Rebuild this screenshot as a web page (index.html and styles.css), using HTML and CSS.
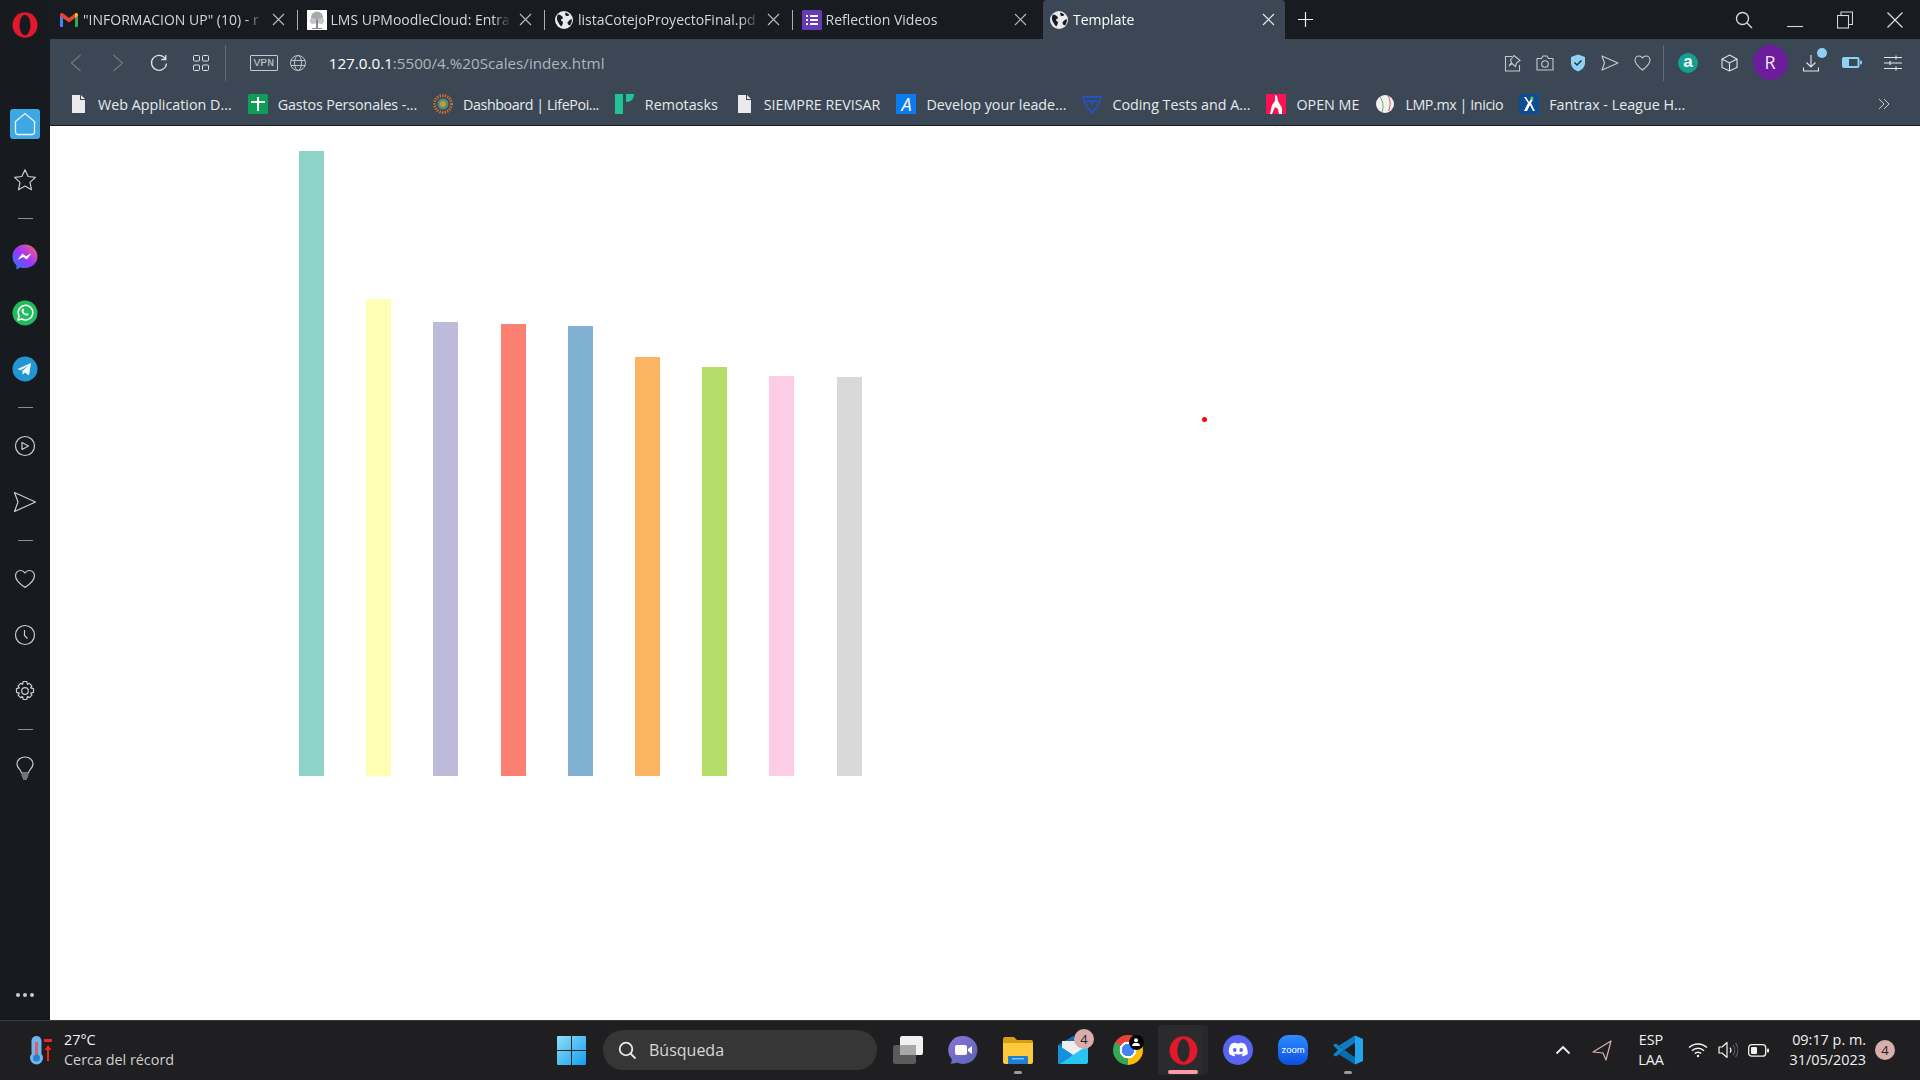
FILE: index.html
```html
<!DOCTYPE html>
<html lang="es">
<head>
    <meta charset="UTF-8">
    <title>Template</title>
    <link rel="stylesheet" href="styles.css">
</head>
<body>

    <!-- iconos repetidos -->
    <svg class="defs" width="0" height="0">
        <symbol id="globe" viewBox="0 0 20 20">
            <circle cx="10" cy="10" r="9" fill="#e8eaed"/>
            <path d="M4 4.5c2 .3 3.5 1 4.5 2.2 1 1.300 0 2.300-1.300 2.500-.7 1 .5 2 1.600 2.500.5 1.600-.6 3.500-1.600 4.800C5 14 3.500 11.500 3 9.500 2.800 7.500 3 6 4 4.500zM11.500 2.500c1.500.5 3 1.300 4 2.500-.8 1-2 1.300-3.300 1-1-.8-1.300-2.200-.7-3.500zM17.800 9c.3 2.500-.5 5-2 6.600-1.500-.3-2.300-1.500-2.300-3 .8-1.600 2.500-3 4.300-3.600z" fill="#181b20"/>
        </symbol>
        <symbol id="doc" viewBox="0 0 20 20">
            <path d="M4 1h8v5h5v13H4zM13 1l4 4h-4z" fill="#e8eaed"/>
        </symbol>
        <symbol id="x" viewBox="0 0 13 13">
            <path d="M1 1l11 11M12 1L1 12" stroke="currentColor" stroke-width="1.100" fill="none"/>
        </symbol>
    </svg>

    <div class="browser">

        <!-- barra lateral -->
        <aside class="sidebar">
            <svg class="opera-logo" viewBox="0 0 26 26"><ellipse cx="13" cy="13" rx="12.500" ry="12.800" fill="#e5172a"/><ellipse cx="13" cy="13" rx="5.500" ry="10.300" fill="#171b20"/></svg>
            <div class="side-btn"><span class="home-box"><svg width="22" height="24" viewBox="0 0 22 24" fill="none" stroke="#e8f4fb" stroke-width="1.300"><path d="M1.500 9.500L11 1.500l9.500 8V20a2.500 2.500 0 0 1-2.500 2.500H4A2.500 2.500 0 0 1 1.500 20z"/></svg></span></div>
            <div class="side-btn"><svg width="26" height="26" viewBox="0 0 24 24" fill="none" stroke="#c9cdd1" stroke-width="1.100"><path d="M12 2.500l2.900 6.300 6.700.8-5 4.600 1.400 6.800-6-3.400-6 3.400 1.400-6.800-5-4.600 6.700-.8z" stroke-linejoin="round"/></svg></div>
            <div class="side-sep"></div>
            <div class="side-btn"><svg width="26" height="26" viewBox="0 0 26 26"><defs><linearGradient id="msg" x1="0" y1="1" x2="1" y2="0"><stop offset="0" stop-color="#1e7cf5"/><stop offset=".5" stop-color="#a033ff"/><stop offset="1" stop-color="#ff6b5c"/></linearGradient></defs><path d="M13 .5C6 .5.500 5.600.500 12.500c0 3.600 1.500 6.700 3.900 8.800V25.500l3.900-2.100c1.500.4 3 .6 4.700.6 7 0 12.500-5.100 12.500-11.500S20 .5 13 .5z" fill="url(#msg)"/><path d="M5.500 16l4.800-6.500 3.600 2.700 5.600-3-4.700 6.400-3.600-2.700z" fill="#fff"/></svg></div>
            <div class="side-btn"><svg width="26" height="26" viewBox="0 0 26 26"><circle cx="13" cy="13" r="12.500" fill="#1fbd5b"/><path d="M6 20l1.100-3.900A7.300 7.300 0 1 1 10 19z" fill="none" stroke="#fff" stroke-width="1.500" stroke-linejoin="round"/><path d="M10.200 9c.8-.8 1.300-.3 1.700 1 .2.600-.7 1-.5 1.500.5 1.100 1.300 1.800 2.400 2.300.5.100.9-.8 1.400-.6 1.300.5 1.800 1 1 1.800-1.200 1.100-3.200.6-5-.9-1.700-1.500-2.200-3.800-1-5.100z" fill="#fff"/></svg></div>
            <div class="side-btn"><svg width="26" height="26" viewBox="0 0 26 26"><circle cx="13" cy="13" r="12.500" fill="#2196d3"/><path d="M5.500 13l13.500-6-2 12.500-4-3-2.200 2.200-.6-3.800 6.300-5.400-8 4.700z" fill="#f2f8fc"/></svg></div>
            <div class="side-sep"></div>
            <div class="side-btn"><svg width="22" height="22" viewBox="0 0 22 22" fill="none" stroke="#c9cdd1" stroke-width="1.200"><circle cx="11" cy="11" r="9.500"/><path d="M8 7.500v7l6.500-3.500z" stroke-linejoin="round"/></svg></div>
            <div class="side-btn"><svg width="24" height="22" viewBox="0 0 24 22" fill="none" stroke="#c9cdd1" stroke-width="1.200"><path d="M1.500 1.500L22.500 11 1.500 20.500 5 11z" stroke-linejoin="round"/></svg></div>
            <div class="side-sep"></div>
            <div class="side-btn"><svg width="22" height="20" viewBox="0 0 22 20" fill="none" stroke="#c9cdd1" stroke-width="1.200"><path d="M11 18.500C5 14.500 1.500 11 1.500 6.800 1.500 3.500 4 1.500 6.500 1.500c2 0 3.500 1 4.500 2.500 1-1.500 2.500-2.500 4.500-2.500 2.500 0 5 2 5 5.300 0 4.200-3.500 7.700-9.500 11.700z" stroke-linejoin="round"/></svg></div>
            <div class="side-btn"><svg width="22" height="22" viewBox="0 0 22 22" fill="none" stroke="#c9cdd1" stroke-width="1.200"><circle cx="11" cy="11" r="9.500"/><path d="M10.500 6v5.500l3 3"/></svg></div>
            <div class="side-btn"><svg width="22" height="22" viewBox="0 0 22 22" fill="none" stroke="#c9cdd1" stroke-width="1.200"><circle cx="11" cy="11" r="3.300"/><path d="M9.200 1.500h3.600l.6 2.800 2-.9 2.500 2.500-1.200 2 2.800.8v3.600l-2.800.8 1.200 2-2.500 2.500-2-1-.6 2.900H9.200l-.6-2.900-2 1-2.500-2.500 1.200-2-2.800-.8V8.700l2.800-.8-1.200-2 2.500-2.500 2 .9z" stroke-linejoin="round"/></svg></div>
            <div class="side-sep"></div>
            <div class="side-btn"><svg width="20" height="24" viewBox="0 0 20 24" fill="none" stroke="#c9cdd1" stroke-width="1.200"><path d="M6.500 17c0-3-4.500-4.500-4.500-9a8 7 0 0 1 16 0c0 4.500-4.500 6-4.500 9z"/><path d="M6.500 19h7M7 21h6M8 23h4"/></svg></div>
            <div class="side-dots"><i></i><i></i><i></i></div>
        </aside>

        <div class="main">

            <!-- pestañas -->
            <div class="tabs">
                <div class="tab">
                    <svg class="tab-icon" viewBox="0 0 20 20"><path d="M1 5h3v12H2a1 1 0 0 1-1-1z" fill="#4285f4"/><path d="M16 5h3v11a1 1 0 0 1-1 1h-2z" fill="#34a853"/><path d="M1 4.500c0-1.500 1.700-2 2.800-1.200L10 8l6-4.500V8l-6 4.500L1 6z" fill="#ea4335"/><path d="M16 3.500c1-.8 3-.3 3 1.200V6l-3 2z" fill="#fbbc04"/></svg>
                    <span class="tab-title">"INFORMACION UP" (10) - r</span>
                    <svg class="tab-close"><use href="#x"/></svg>
                </div>
                <div class="tab">
                    <svg class="tab-icon" viewBox="0 0 20 20"><rect width="20" height="20" fill="#fff"/><circle cx="10" cy="7.500" r="6" fill="#a9a9a9"/><circle cx="6" cy="11" r="3" fill="#c4c4c4"/><circle cx="14" cy="11" r="3" fill="#c4c4c4"/><path d="M9 10h2v8H9zM5 18h10v1H5z" fill="#8a8a8a"/></svg>
                    <span class="tab-title">LMS UPMoodleCloud: Entra</span>
                    <svg class="tab-close"><use href="#x"/></svg>
                </div>
                <div class="tab">
                    <svg class="tab-icon"><use href="#globe"/></svg>
                    <span class="tab-title">listaCotejoProyectoFinal.pd</span>
                    <svg class="tab-close"><use href="#x"/></svg>
                </div>
                <div class="tab tab-last">
                    <svg class="tab-icon" viewBox="0 0 20 20"><rect width="20" height="20" rx="1.500" fill="#673ab7"/><path d="M4 5h2v2H4zM8 5h8v2H8zM4 9h2v2H4zM8 9h8v2H8zM4 13h2v2H4zM8 13h8v2H8z" fill="#fff"/></svg>
                    <span class="tab-title">Reflection Videos</span>
                    <svg class="tab-close"><use href="#x"/></svg>
                </div>
                <div class="tab tab-active">
                    <svg class="tab-icon"><use href="#globe"/></svg>
                    <span class="tab-title">Template</span>
                    <svg class="tab-close"><use href="#x"/></svg>
                </div>
                <svg class="tab-new" width="15" height="15" viewBox="0 0 15 15"><path d="M7.500 0v15M0 7.500h15" stroke="#f0f2f4" stroke-width="1.200"/></svg>
                <div class="win-controls">
                    <svg class="win-search" width="18" height="18" viewBox="0 0 18 18" fill="none" stroke="#d5d8db" stroke-width="1.400"><circle cx="7.500" cy="7.500" r="6"/><path d="M12 12l5 5"/></svg>
                    <svg class="win-btn" width="16" height="16" viewBox="0 0 16 16"><path d="M0 14.500h16" stroke="#d5d8db" stroke-width="1.100"/></svg>
                    <svg class="win-btn" width="16" height="18" viewBox="0 0 16 18" fill="none" stroke="#d5d8db" stroke-width="1.100"><rect x=".5" y="4.500" width="11" height="12.500"/><path d="M4 4.500V1h11.500v12.500h-4"/></svg>
                    <svg class="win-btn" width="16" height="16" viewBox="0 0 16 16"><path d="M.5.500l15 15M15.500.500l-15 15" stroke="#e3e5e7" stroke-width="1.100"/></svg>
                </div>
            </div>

            <!-- barra de dirección -->
            <div class="toolbar">
                <div class="tool"><svg width="12" height="18" viewBox="0 0 12 18" fill="none" stroke="#6d7984" stroke-width="1.200"><path d="M10.500 1l-9 8 9 8"/></svg></div>
                <div class="tool"><svg width="12" height="18" viewBox="0 0 12 18" fill="none" stroke="#6d7984" stroke-width="1.200"><path d="M1.500 1l9 8-9 8"/></svg></div>
                <div class="tool"><svg width="18" height="18" viewBox="0 0 18 18" fill="none" stroke="#dfe2e5" stroke-width="1.300"><path d="M15.500 5A7.500 7.500 0 1 0 16.500 9.500M15.800 1v4.500h-4.500"/></svg></div>
                <div class="tool"><svg width="16" height="16" viewBox="0 0 16 16" fill="none" stroke="#dfe2e5" stroke-width="1"><rect x=".5" y=".5" width="6" height="5.500" rx="1"/><rect x="9.500" y=".5" width="6" height="5.500" rx="1"/><rect x=".5" y="10" width="6" height="5.500" rx="1"/><rect x="9.500" y="10" width="6" height="5.500" rx="1"/></svg></div>
                <div class="tool-sep"></div>
                <span class="vpn">VPN</span>
                <svg class="url-globe" width="16" height="16" viewBox="0 0 16 16" fill="none" stroke="#c9cdd1" stroke-width=".9"><circle cx="8" cy="8" r="7.500"/><ellipse cx="8" cy="8" rx="3.500" ry="7.500"/><path d="M1 5.500h14M1 10.500h14"/></svg>
                <div class="url"><b>127.0.0.1</b>:5500/4.%20Scales/index.html</div>
                <div class="tool-right">
                    <div class="tool-sm"><svg width="18" height="18" viewBox="0 0 18 18" fill="none" stroke="#c4c9ce" stroke-width="1.100"><path d="M8 2.500H1.500V17h14v-6M10 1.500l6 5-3.500 2.500-1 3.500-3.500-3-3 2.500 2.500-3.500-1-2.500z"/></svg></div>
                    <div class="tool-sm"><svg width="18" height="16" viewBox="0 0 18 16" fill="none" stroke="#c4c9ce" stroke-width="1.100"><path d="M1 3.500h4.500L7 1h4l1.500 2.500H17V15H1z" stroke-linejoin="round"/><circle cx="9" cy="9" r="3.300"/></svg></div>
                    <div class="tool-sm"><svg width="16" height="18" viewBox="0 0 16 18"><path d="M8 .5l7 2.500v6c0 4-3 7-7 8.500-4-1.500-7-4.500-7-8.500V3z" fill="#8fd0f5"/><path d="M4.500 8.500L7 11l4.500-4.500" fill="none" stroke="#26323d" stroke-width="1.500"/></svg></div>
                    <div class="tool-sm"><svg width="18" height="16" viewBox="0 0 18 16" fill="none" stroke="#c4c9ce" stroke-width="1.100"><path d="M1 1l16 7-16 7 2.500-7z" stroke-linejoin="round"/></svg></div>
                    <div class="tool-sm"><svg width="17" height="16" viewBox="0 0 17 16" fill="none" stroke="#c4c9ce" stroke-width="1.100"><path d="M8.500 15C4 11.500 1 9 1 5.200 1 2.800 2.800 1 5 1c1.500 0 2.700.8 3.500 2C9.300 1.800 10.500 1 12 1c2.200 0 4 1.800 4 4.200C16 9 13 11.500 8.500 15z"/></svg></div>
                    <div class="tool-sep tool-sep-right"></div>
                    <div class="tool"><span class="amazon">a</span></div>
                    <div class="tool"><svg width="17" height="18" viewBox="0 0 17 18" fill="none" stroke="#e3e6e8" stroke-width="1.100"><path d="M8.500 1L16 5v8.500L8.500 17 1 13.500V5zM1 5l7.500 4L16 5M8.500 9v8"/></svg></div>
                    <div class="tool"><span class="avatar">R</span></div>
                    <div class="tool tool-dl"><svg width="16" height="18" viewBox="0 0 16 18" fill="none" stroke="#e3e6e8" stroke-width="1.100"><path d="M8 1v12M3.500 8.500L8 13l4.500-4.500M.5 13.500v3.500h15v-3.500"/></svg><i class="dl-dot"></i></div>
                    <div class="tool"><svg width="20" height="11" viewBox="0 0 20 11"><rect width="17.500" height="11" rx="2" fill="#8fd0f5"/><rect x="7" y="2" width="8.500" height="7" fill="#3b4754"/><rect x="18" y="3.500" width="2" height="4" rx="1" fill="#8fd0f5"/></svg></div>
                    <div class="tool"><svg width="18" height="16" viewBox="0 0 18 16" stroke="#e3e6e8" stroke-width="1.100" fill="none"><path d="M0 2.500h18M0 8h18M0 13.500h18M12 .5v4M6 6v4M12 11.500v4"/></svg></div>
                </div>
            </div>

            <!-- marcadores -->
            <div class="bookmarks">
                <div class="bm"><svg class="bm-icon"><use href="#doc"/></svg>Web Application D...</div>
                <div class="bm bm-snug"><svg class="bm-icon" viewBox="0 0 20 20"><rect width="20" height="20" rx="1.500" fill="#0f9d58"/><path d="M9 3h2v4h6v2h-6v8H9V9H3V7h6z" fill="#fff"/></svg>Gastos Personales -...</div>
                <div class="bm bm-tight"><svg class="bm-icon" viewBox="0 0 20 20" fill="none"><circle cx="10" cy="10" r="8.500" stroke="#d9702b" stroke-width="3" stroke-dasharray="1.300 1.300"/><circle cx="10" cy="10" r="5.500" fill="#4d8f7b"/><circle cx="10" cy="10" r="3" fill="#c29b3b"/></svg>Dashboard | LifePoi...</div>
                <div class="bm"><svg class="bm-icon" viewBox="0 0 20 20"><rect x="0" width="8" height="20" fill="#1fc497"/><path d="M11 0h8c0 5-3 8-8 8z" fill="#1fc497"/></svg>Remotasks</div>
                <div class="bm"><svg class="bm-icon"><use href="#doc"/></svg>SIEMPRE REVISAR</div>
                <div class="bm"><span class="bm-a">A</span>Develop your leade...</div>
                <div class="bm"><svg class="bm-icon" viewBox="0 0 20 20" fill="none" stroke="#1d57e0" stroke-width="1.400"><path d="M1 3h18l-3 8-6 8-6-8zM5 7h4l1 3 1-3h4"/></svg>Coding Tests and A...</div>
                <div class="bm"><svg class="bm-icon" viewBox="0 0 20 20"><rect width="20" height="20" fill="#ff1053"/><path d="M9 1l2 1 1 5 4 7v6h-3l-1-5-3-2-3 7H4l2-9 3-4z" fill="#fff"/></svg>OPEN ME</div>
                <div class="bm bm-tight"><svg class="bm-icon" viewBox="0 0 20 20" fill="none"><circle cx="10" cy="10" r="9" fill="#f2f2f2"/><path d="M5 3c3 4 4 9 2 15" stroke="#5fae72" stroke-width="1"/><path d="M13 2c2.500 4 3 9 .5 15" stroke="#d9534f" stroke-width="1"/></svg>LMP.mx | Inicio</div>
                <div class="bm"><svg class="bm-icon" viewBox="0 0 20 20"><rect width="20" height="20" fill="#0b4e96"/><path d="M5 3l4 6-4 8h3l3-6 3 6h2l-4-8 2-3-2-1-2 3-3-5z" fill="#fff"/><circle cx="13" cy="4" r="1.500" fill="#7ed321"/></svg>Fantrax - League H...</div>
                <svg class="bm-more" width="12" height="12" viewBox="0 0 12 12" fill="none" stroke="#c9cdd1" stroke-width="1"><path d="M1 1l5 5-5 5M6 1l5 5-5 5"/></svg>
            </div>

            <!-- contenido de la página -->
            <div class="content">
                <div class="chart">
                    <div class="bar bar-1" style="height: 625px"></div>
                    <div class="bar bar-2" style="height: 477px"></div>
                    <div class="bar bar-3" style="height: 454px"></div>
                    <div class="bar bar-4" style="height: 452px"></div>
                    <div class="bar bar-5" style="height: 450px"></div>
                    <div class="bar bar-6" style="height: 419px"></div>
                    <div class="bar bar-7" style="height: 409px"></div>
                    <div class="bar bar-8" style="height: 400px"></div>
                    <div class="bar bar-9" style="height: 399px"></div>
                </div>
                <div class="dot"></div>
            </div>
        </div>
    </div>

    <!-- barra de tareas -->
    <footer class="taskbar">
        <div class="weather">
            <svg width="24" height="30" viewBox="0 0 24 30"><rect x="2.500" y="1" width="10" height="21" rx="5" fill="#6cb8ee"/><circle cx="7.500" cy="23" r="6.500" fill="#6cb8ee"/><rect x="6" y="7" width="3" height="14" fill="#e05a6d"/><circle cx="7.500" cy="23" r="3.500" fill="#2f7fd1"/><rect x="15" y="4" width="8" height="3" fill="#f0261d"/><path d="M19 10l3.500 5H20v11h-2V15h-2.500z" fill="#f0261d"/></svg>
            <div class="weather-text">
                <span class="weather-temp">27°C</span>
                <span class="weather-note">Cerca del récord</span>
            </div>
        </div>
        <svg class="start" width="29" height="29" viewBox="0 0 29 29"><defs><linearGradient id="win" x1="0" y1="0" x2="1" y2="1"><stop offset="0" stop-color="#8ee0f7"/><stop offset="1" stop-color="#119ef0"/></linearGradient></defs><path d="M0 1a1 1 0 0 1 1-1h13v14H0zM15 0h13a1 1 0 0 1 1 1v13H15zM0 15h14v14H1a1 1 0 0 1-1-1zM15 15h14v13a1 1 0 0 1-1 1H15z" fill="url(#win)"/></svg>
        <div class="search">
            <svg width="19" height="19" viewBox="0 0 19 19" fill="none" stroke="#e8e8e8" stroke-width="1.800"><circle cx="8" cy="8" r="6.300"/><path d="M12.500 12.500l5 5"/></svg>
            <span>Búsqueda</span>
        </div>
        <div class="apps">
            <div class="app"><svg width="30" height="28" viewBox="0 0 30 28"><rect y="9" width="23" height="19" rx="2.500" fill="#5b5b5b"/><rect x="7" width="23" height="19" rx="2" fill="#f1f1f1"/><rect x="7" y="9" width="16" height="10" fill="#a8a8a8"/></svg></div>
            <div class="app"><svg width="30" height="30" viewBox="0 0 30 30"><defs><linearGradient id="teams" x1="0" y1="0" x2="1" y2="1"><stop offset="0" stop-color="#8c74d8"/><stop offset="1" stop-color="#5a63b5"/></linearGradient></defs><path d="M15.500 1a14 14 0 1 1-6 26.700L2.500 29c1.200-1.500 1.500-3.500 1-5.200A14 14 0 0 1 15.500 1z" fill="url(#teams)"/><rect x="7" y="10" width="12" height="10" rx="2" fill="#fff"/><path d="M20 14l4-3v8l-4-3z" fill="#fff"/></svg></div>
            <div class="app app-open"><svg width="30" height="27" viewBox="0 0 30 27"><path d="M0 2a2 2 0 0 1 2-2h9l3 3h14a2 2 0 0 1 2 2v4H0z" fill="#d99f14"/><path d="M0 6h30v19a2 2 0 0 1-2 2H2a2 2 0 0 1-2-2z" fill="#ffc83d"/><path d="M5 27v-7a1 1 0 0 1 1-1h18a1 1 0 0 1 1 1v7z" fill="#1c7fd1"/><rect x="9" y="21" width="12" height="1.500" fill="#7fc4f0"/></svg></div>
            <div class="app"><svg width="30" height="28" viewBox="0 0 30 28"><path d="M0 9L15 0l15 9v2H0z" fill="#0f6cbd"/><path d="M4 5h22v14H4z" fill="#eee"/><path d="M0 9l15 10L30 9v17a2 2 0 0 1-2 2H2a2 2 0 0 1-2-2z" fill="#29c4f0"/><path d="M0 26V9l15 10L2 28a2 2 0 0 1-2-2z" fill="#1490df"/></svg><span class="app-badge">4</span></div>
            <div class="app"><span class="chrome"></span><span class="chrome-user"><svg width="8" height="8" viewBox="0 0 8 8" fill="#fff"><circle cx="4" cy="2.200" r="2"/><path d="M0 8c0-2.500 2-3 4-3s4 .5 4 3z"/></svg></span></div>
            <div class="app app-active"><svg width="29" height="29" viewBox="0 0 26 26"><ellipse cx="13" cy="13" rx="12.500" ry="12.800" fill="#e5172a"/><ellipse cx="13" cy="13" rx="5.500" ry="10.300" fill="#2b2b2d"/></svg></div>
            <div class="app"><svg width="30" height="30" viewBox="0 0 30 30"><circle cx="15" cy="15" r="15" fill="#5865f2"/><path d="M8 9c2-1 3.500-1.400 4.500-1.500l.5 1c1.300-.2 2.700-.2 4 0l.5-1c1 .1 2.500.5 4.500 1.500 2 3 3 6.500 2.700 10-1.800 1.300-3.500 2-5 2.500l-1-1.800c.6-.2 1.200-.5 1.700-.9l-.5-.3c-2.800 1.300-6 1.300-8.800 0l-.5.3c.5.400 1.100.7 1.700.9l-1 1.800c-1.500-.5-3.200-1.200-5-2.500C5 15.500 6 12 8 9z" fill="#fff"/><ellipse cx="11.800" cy="15" rx="1.800" ry="2" fill="#5865f2"/><ellipse cx="18.200" cy="15" rx="1.800" ry="2" fill="#5865f2"/></svg></div>
            <div class="app"><span class="zoom">zoom</span></div>
            <div class="app app-open"><svg width="30" height="30" viewBox="0 0 30 30"><path d="M22 .5L30 4v22l-8 3.500V.5z" fill="#20a5ee"/><path d="M22 .5v7L11.500 15 6 10.500z" fill="#0f7bc4"/><path d="M22 29.500v-7L11.500 15 6 19.500z" fill="#0a6cb0"/><path d="M0 10l3-1.500L11.500 15 3 21.500 0 20l5-5z" fill="#0e84cf"/></svg></div>
        </div>
        <div class="tray">
            <div class="tray-item"><svg width="16" height="10" viewBox="0 0 16 10" fill="none" stroke="#f2f2f2" stroke-width="1.800"><path d="M1.500 8.500L8 2l6.500 6.500"/></svg></div>
            <div class="tray-item tray-arrow"><svg width="20" height="21" viewBox="0 0 20 21" fill="none" stroke="#d9b4b0" stroke-width="1.200"><path d="M1 12L19 1l-5 19-3-7z" stroke-linejoin="round"/></svg></div>
            <div class="lang">ESP<br>LAA</div>
            <div class="tray-item tray-wifi"><svg width="20" height="16" viewBox="0 0 20 16" fill="none" stroke="#f2f2f2" stroke-width="1.500"><path d="M1 5.500a13 13 0 0 1 18 0M4 8.700a8.500 8.500 0 0 1 12 0M6.800 11.500a4.500 4.500 0 0 1 6.400 0"/><circle cx="10" cy="14" r="1.200" fill="#f2f2f2" stroke="none"/></svg></div>
            <div class="tray-item tray-sound"><svg width="20" height="18" viewBox="0 0 20 18" fill="none" stroke="#f2f2f2" stroke-width="1.200"><path d="M1 6h3l5-4.500v15L4 12H1z" stroke-linejoin="round"/><path d="M12 6.500a4 4 0 0 1 0 5"/><path d="M15 4a8 8 0 0 1 0 10M17.500 2a11 11 0 0 1 0 14" stroke="#5c5c5c"/></svg></div>
            <div class="tray-item tray-batt"><svg width="21" height="13" viewBox="0 0 21 13" fill="none"><rect x=".7" y=".7" width="17" height="11.500" rx="3" stroke="#f2f2f2" stroke-width="1.300"/><rect x="3" y="3" width="6" height="7" rx="1" fill="#f2f2f2"/><rect x="19" y="4.500" width="2" height="4" rx="1" fill="#f2f2f2"/></svg></div>
            <div class="clock">09:17 p. m.<br>31/05/2023</div>
            <span class="notif">4</span>
        </div>
    </footer>

</body>
</html>
```

FILE: styles.css
```css
* {
    box-sizing: border-box;
}
html, body {
    margin: 0;
    padding: 0;
    height: 100%;
}
body {
    width: 1920px;
    height: 1080px;
    overflow: hidden;
    display: flex;
    flex-direction: column;
    font-family: "Open Sans", "Noto Sans", sans-serif;
    font-size: 14px;
    color: #e8eaed;
    background: #fff;
}
svg {
    display: block;
    flex-shrink: 0;
}
.defs {
    position: absolute;
}
.browser {
    flex: 1;
    display: flex;
    min-height: 0;
}

/* barra lateral */
.sidebar {
    width: 50px;
    flex-shrink: 0;
    display: flex;
    flex-direction: column;
    align-items: center;
    background: #171b20;
}
.opera-logo {
    width: 26px;
    height: 26px;
    margin: 12px 0 58px;
}
.side-btn {
    height: 56px;
    width: 100%;
    display: flex;
    align-items: center;
    justify-content: center;
}
.home-box {
    width: 30px;
    height: 30px;
    border-radius: 3px;
    background: #3fa8e4;
    display: flex;
    align-items: center;
    justify-content: center;
}
.side-sep {
    height: 21px;
    width: 15px;
    margin-left: 1px;
    display: flex;
    align-items: center;
}
.side-sep::before {
    content: "";
    width: 100%;
    height: 1px;
    background: #8a8f94;
}
.side-dots {
    margin-top: auto;
    margin-bottom: 23px;
    display: flex;
    gap: 3px;
}
.side-dots i {
    width: 4px;
    height: 4px;
    border-radius: 50%;
    background: #c9cdd1;
}

.main {
    flex: 1;
    min-width: 0;
    display: flex;
    flex-direction: column;
}

/* pestañas */
.tabs {
    height: 39px;
    flex-shrink: 0;
    display: flex;
    align-items: stretch;
    background: #181b20;
}
.tab {
    width: 247.5px;
    flex-shrink: 0;
    display: flex;
    align-items: center;
    padding: 0 13px 0 9px;
    position: relative;
    color: #d3d7db;
    font-size: 14px;
}
.tab::after {
    content: "";
    position: absolute;
    right: 0;
    top: 10px;
    height: 20px;
    width: 1px;
    background: #aab0b5;
}
.tab-last::after {
    display: none;
}
.tab-icon {
    width: 20px;
    height: 20px;
    margin-right: 4px;
}
.tab-title {
    flex: 1;
    white-space: nowrap;
    -webkit-mask-image: linear-gradient(to right, #000 calc(100% - 18px), transparent);
    mask-image: linear-gradient(to right, #000 calc(100% - 18px), transparent);
}
.tab-close {
    width: 13px;
    height: 13px;
    margin-left: 8px;
    color: #b9bdc1;
}
.tab-active {
    margin-left: 3px;
    margin-right: 3px;
    width: 241.5px;
    padding-left: 6px;
    padding-right: 10px;
    background: #3b4754;
    border-radius: 4px 4px 0 0;
    color: #fff;
}
.tab-active::after {
    display: none;
}
.tab-active .tab-close {
    color: #eef0f2;
}
.tab-new {
    align-self: center;
    margin-left: 10px;
}
.win-controls {
    margin-left: auto;
    display: flex;
    align-items: center;
    padding-right: 17px;
}
.win-btn {
    margin-left: 34px;
}

/* barra de dirección */
.toolbar {
    height: 47px;
    flex-shrink: 0;
    display: flex;
    align-items: center;
    padding-left: 5px;
    background: #3b4754;
}
.tool {
    width: 41.7px;
    height: 47px;
    flex-shrink: 0;
    display: flex;
    align-items: center;
    justify-content: center;
}
.tool-sm {
    width: 32.5px;
    height: 47px;
    display: flex;
    align-items: center;
    justify-content: center;
}
.tool-sep {
    width: 1px;
    height: 36px;
    margin: 0 24px 0 3px;
    background: #5f6b76;
}
.tool-sep-right {
    margin: 0 3.5px 0 4px;
}
.vpn {
    width: 28px;
    height: 16px;
    border: 1px solid #c4c9ce;
    border-radius: 1px;
    font-family: "Liberation Mono", monospace;
    font-size: 11.500px;
    line-height: 14px;
    text-align: center;
    color: #c4c9ce;
}
.url-globe {
    margin-left: 12px;
}
.url {
    margin-left: 23px;
    font-size: 15.200px;
    color: #aeb6bd;
    white-space: nowrap;
}
.url b {
    font-weight: 400;
    color: #fff;
}
.tool-right {
    margin-left: auto;
    display: flex;
    align-items: center;
    padding-right: 6.5px;
}
.tool-right .tool {
    width: 41px;
}
.amazon {
    width: 20px;
    height: 20px;
    border-radius: 50%;
    background: #12a08f;
    color: #fff;
    font-family: "Liberation Sans", sans-serif;
    font-size: 17px;
    font-weight: 700;
    line-height: 17px;
    text-align: center;
}
.avatar {
    width: 35px;
    height: 35px;
    border-radius: 50%;
    background: #6b1d9c;
    color: #f2e8f7;
    font-size: 18px;
    line-height: 35px;
    text-align: center;
}
.tool-dl {
    position: relative;
}
.dl-dot {
    position: absolute;
    left: 26px;
    top: 9px;
    width: 10px;
    height: 10px;
    border-radius: 50%;
    background: #8fd0f5;
}

/* marcadores */
.bookmarks {
    height: 40px;
    flex-shrink: 0;
    display: flex;
    align-items: center;
    gap: 16px;
    padding: 0 30px 3px 18px;
    background: #3b4754;
    border-bottom: 1px solid #14171b;
    font-size: 14.300px;
    color: #e6e9ec;
    white-space: nowrap;
}
.bm {
    display: flex;
    align-items: center;
    gap: 10px;
}
.bm-snug {
    letter-spacing: -.12px;
}
.bm-tight {
    letter-spacing: -.42px;
}
.bm-icon {
    width: 20px;
    height: 20px;
}
.bm-a {
    width: 20px;
    height: 20px;
    background: #0a7cf0;
    color: #fff;
    font-style: italic;
    font-size: 18px;
    line-height: 20px;
    text-align: center;
}
.bm-more {
    margin-left: auto;
}

/* contenido */
.content {
    flex: 1;
    position: relative;
    background: #fff;
}
.chart {
    height: 650px;
    display: flex;
    align-items: flex-end;
    gap: 42.2px;
    padding-left: 249px;
}
.bar {
    width: 25px;
    flex-shrink: 0;
}
.bar-1 { background: #8dd3c7; }
.bar-2 { background: #ffffb3; }
.bar-3 { background: #bebada; }
.bar-4 { background: #fb8072; }
.bar-5 { background: #80b1d3; }
.bar-6 { background: #fdb462; }
.bar-7 { background: #b3de69; }
.bar-8 { background: #fccde5; }
.bar-9 { background: #d9d9d9; }
.dot {
    position: absolute;
    left: 1152px;
    top: 291px;
    width: 5px;
    height: 5px;
    border-radius: 50%;
    background: #f00;
}

/* barra de tareas */
.taskbar {
    height: 60px;
    flex-shrink: 0;
    display: flex;
    align-items: center;
    padding-bottom: 1px;
    background: #1f1f21;
    border-top: 1px solid #3a3a3b;
    color: #f2f2f2;
}
.weather {
    width: 557px;
    flex-shrink: 0;
    padding-left: 29px;
    display: flex;
    align-items: center;
    gap: 11px;
}
.weather-text {
    display: flex;
    flex-direction: column;
    line-height: 20px;
    font-size: 14.400px;
}
.weather-note {
    color: #cfcfcf;
}
.search {
    width: 274px;
    height: 40px;
    margin-left: 17px;
    padding-left: 15px;
    border-radius: 20px;
    background: #363637;
    display: flex;
    align-items: center;
    gap: 12px;
    font-size: 16px;
    color: #d8d8d8;
}
.apps {
    display: flex;
    margin-left: 3.5px;
}
.app {
    width: 55px;
    height: 58px;
    position: relative;
    display: flex;
    align-items: center;
    justify-content: center;
}
.app > svg, .app > span {
    position: relative;
}
.app-open::after {
    content: "";
    position: absolute;
    left: 23.500px;
    bottom: 5px;
    width: 8px;
    height: 3px;
    border-radius: 2px;
    background: #9a9a9a;
}
.app-active::before {
    content: "";
    position: absolute;
    left: 2.500px;
    top: 4px;
    width: 44px;
    height: 50px;
    border-radius: 4px;
    background: #2b2b2d;
    box-shadow: 6px 0 0 #28282a;
}
.app-active::after {
    content: "";
    position: absolute;
    left: 12.500px;
    bottom: 5px;
    width: 30px;
    height: 4px;
    border-radius: 2px;
    background: #ff9aa8;
}
.app-badge {
    position: absolute !important;
    left: 28.500px;
    top: 8px;
    width: 20px;
    height: 20px;
    border-radius: 50%;
    background: #d9aeaa;
    color: #222;
    font-size: 13px;
    line-height: 20px;
    text-align: center;
}
.chrome {
    width: 30px;
    height: 30px;
    border-radius: 50%;
    background:
        radial-gradient(circle closest-side, #4285f4 0 42%, #fff 43% 56%, transparent 57%),
        conic-gradient(from -60deg, #ea4335 0 120deg, #fbbc04 120deg 240deg, #34a853 240deg 360deg);
}
.chrome-user {
    position: absolute !important;
    left: 28px;
    top: 13.500px;
    width: 15px;
    height: 15px;
    border-radius: 50%;
    background: #000;
    display: flex;
    align-items: center;
    justify-content: center;
}
.zoom {
    width: 30px;
    height: 30px;
    border-radius: 10px;
    background: linear-gradient(#2d8cff, #0b4fe0);
    color: #fff;
    font-family: "Liberation Sans", sans-serif;
    font-size: 9.500px;
    line-height: 30px;
    text-align: center;
}
.tray {
    margin-left: auto;
    display: flex;
    align-items: center;
    padding-right: 25px;
}
.tray-item {
    width: 30px;
    display: flex;
    justify-content: center;
}
.tray-arrow {
    width: 48px;
}
.tray-wifi {
    margin-left: 7px;
}
.lang {
    width: 50px;
    text-align: center;
    line-height: 20px;
    font-size: 14.400px;
}
.clock {
    width: 93px;
    text-align: right;
    line-height: 20px;
    font-size: 14.400px;
    white-space: nowrap;
}
.notif {
    width: 20px;
    height: 20px;
    margin-left: 9px;
    border-radius: 50%;
    background: #d9aeaa;
    color: #222;
    font-size: 13px;
    line-height: 20px;
    text-align: center;
}
```
